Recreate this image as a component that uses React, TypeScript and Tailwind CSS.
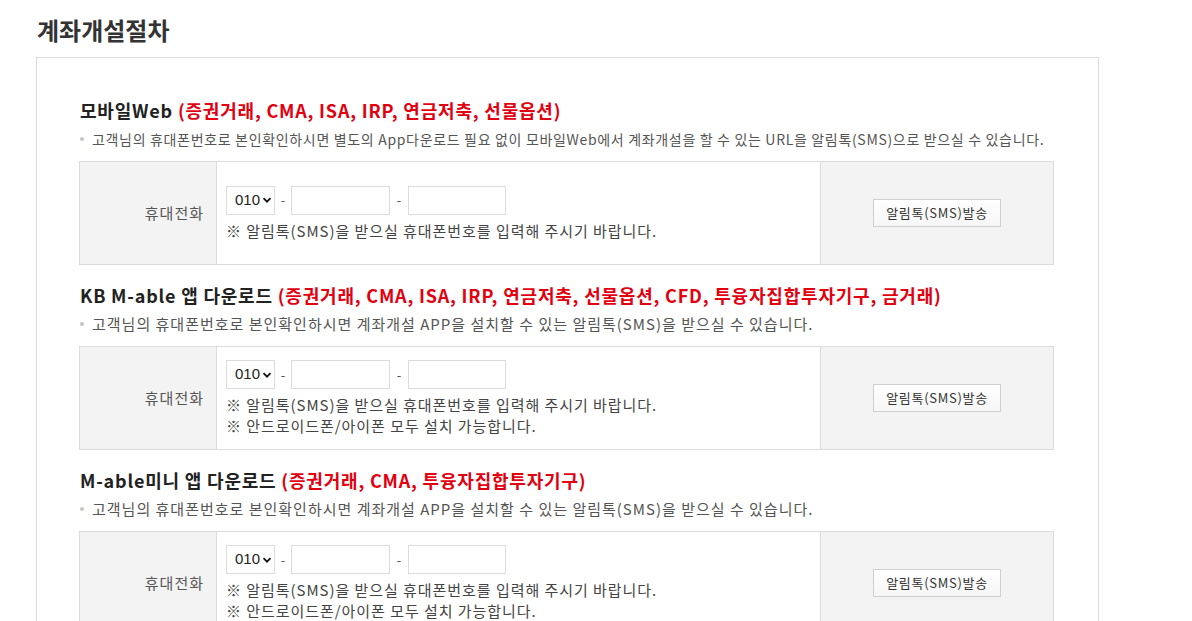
import React from 'react';

const FONT = "font-['Noto_Sans_CJK_KR','Noto_Sans',sans-serif]";

type Section = {
  title: string;
  products: string;
  desc: string;
  tight?: boolean;
  notes: string[];
};

const sections: Section[] = [
  {
    title: '모바일Web',
    products: '(증권거래, CMA, ISA, IRP, 연금저축, 선물옵션)',
    desc: '고객님의 휴대폰번호로 본인확인하시면 별도의 App다운로드 필요 없이 모바일Web에서 계좌개설을 할 수 있는 URL을 알림톡(SMS)으로 받으실 수 있습니다.',
    tight: true,
    notes: ['※ 알림톡(SMS)을 받으실 휴대폰번호를 입력해 주시기 바랍니다.'],
  },
  {
    title: 'KB M-able 앱 다운로드',
    products: '(증권거래, CMA, ISA, IRP, 연금저축, 선물옵션, CFD, 투융자집합투자기구, 금거래)',
    desc: '고객님의 휴대폰번호로 본인확인하시면 계좌개설 APP을 설치할 수 있는 알림톡(SMS)을 받으실 수 있습니다.',
    notes: [
      '※ 알림톡(SMS)을 받으실 휴대폰번호를 입력해 주시기 바랍니다.',
      '※ 안드로이드폰/아이폰 모두 설치 가능합니다.',
    ],
  },
  {
    title: 'M-able미니 앱 다운로드',
    products: '(증권거래, CMA, 투융자집합투자기구)',
    desc: '고객님의 휴대폰번호로 본인확인하시면 계좌개설 APP을 설치할 수 있는 알림톡(SMS)을 받으실 수 있습니다.',
    notes: [
      '※ 알림톡(SMS)을 받으실 휴대폰번호를 입력해 주시기 바랍니다.',
      '※ 안드로이드폰/아이폰 모두 설치 가능합니다.',
    ],
  },
];

const PhoneRow: React.FC<{ notes: string[] }> = ({ notes }) => (
  <div className="flex h-[104px] border border-[#dcdcdc]">
    {/* 라벨 */}
    <div className="flex w-[137px] items-center justify-end border-r border-[#dcdcdc] bg-[#f3f3f3] pr-[12px] text-[15px] tracking-[1px] text-[#555]">
      휴대전화
    </div>

    {/* 입력 */}
    <div className="flex flex-1 flex-col justify-center border-r border-[#dcdcdc] pl-[9px]">
      <div className="flex items-center">
        <div className="flex h-[29px] w-[49px] items-center border border-[#dcdcdc] pl-[8px] text-[15px] text-[#222] font-['Liberation_Sans',sans-serif]">
          010
          <svg className="ml-[2px]" width="10" height="10" viewBox="0 0 10 10">
            <path d="M1.5 3.2 L5 6.7 L8.5 3.2" fill="none" stroke="#111" strokeWidth="1.8" />
          </svg>
        </div>
        <span className="w-[16px] text-center text-[13px] text-[#555]">-</span>
        <div className="h-[29px] w-[99px] border border-[#dcdcdc]" />
        <span className="w-[18px] text-center text-[13px] text-[#555]">-</span>
        <div className="h-[29px] w-[98px] border border-[#dcdcdc]" />
      </div>
      <div className="mt-[5px]">
        {notes.map((n) => (
          <div key={n} className="text-[15px] leading-[21px] tracking-[0.95px] text-[#444]">
            {n}
          </div>
        ))}
      </div>
    </div>

    {/* 버튼 */}
    <div className="flex w-[232px] items-center justify-center bg-[#f3f3f3]">
      <button className="h-[28px] w-[128px] border border-[#cfcfcf] bg-gradient-to-b from-white to-[#f6f6f6] text-[13px] tracking-[0.7px] text-[#333]">
        알림톡(SMS)발송
      </button>
    </div>
  </div>
);

export default function App() {
  return (
    <div className={`${FONT} min-h-screen bg-white pl-[36px] pt-[15px]`}>
      <h1 className="pl-[1px] text-[24px] font-bold leading-[30px] text-[#333]">계좌개설절차</h1>

      <div className="mt-[12px] w-[1063px] border border-[#dcdcdc] pb-[40px] pl-[42px] pr-[44px] pt-[40px]">
        {sections.map((s, i) => (
          <div key={s.title} className={i > 0 ? 'mt-[18px]' : ''}>
            <h2 className="pl-[1px] text-[18px] font-bold leading-[24px] tracking-[0.8px] text-[#222]">
              {s.title} <span className="text-[#e20010]">{s.products}</span>
            </h2>
            <div
              className={`mt-[7px] flex items-center leading-[20px] text-[#555] ${
                s.tight ? 'text-[14px] tracking-[0.67px]' : 'text-[15px] tracking-[1px]'
              }`}
            >
              <span className="ml-[1px] mr-[8px] h-[4px] w-[4px] shrink-0 rounded-full bg-[#c4c4c4]" />
              {s.desc}
            </div>
            <div className="mt-[12px]">
              <PhoneRow notes={s.notes} />
            </div>
          </div>
        ))}
      </div>
    </div>
  );
}
